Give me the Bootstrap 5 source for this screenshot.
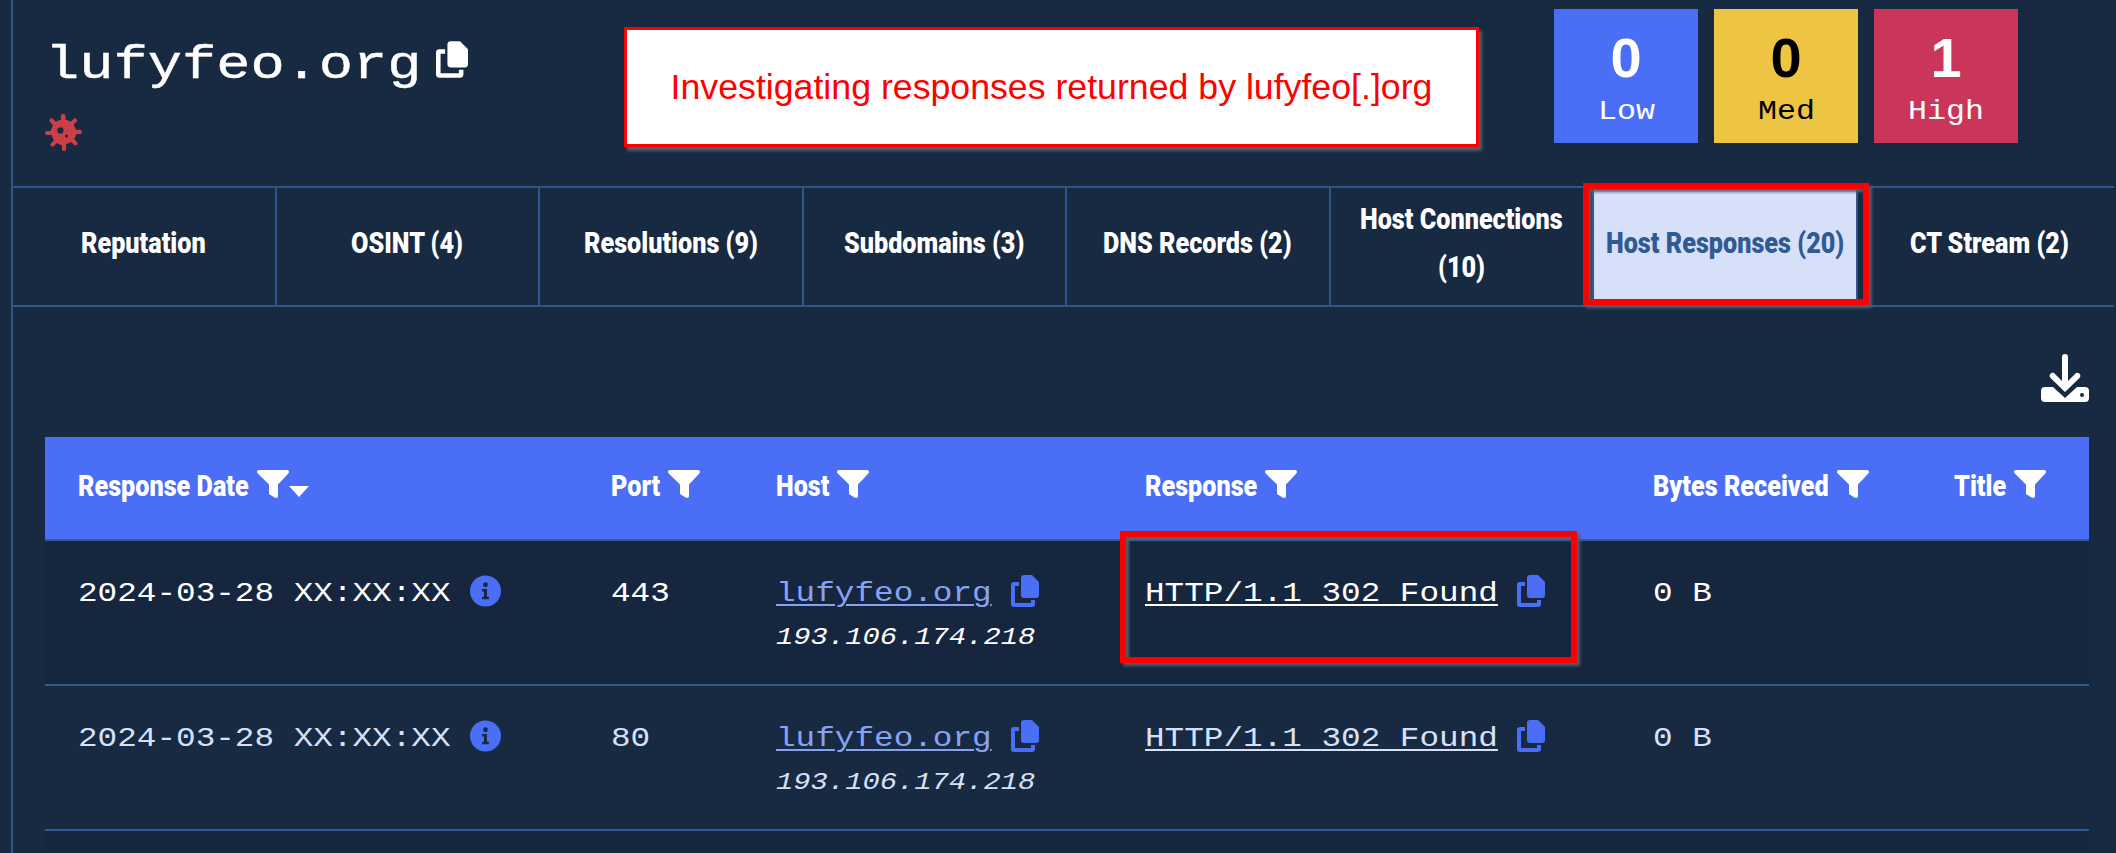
<!DOCTYPE html>
<html lang="en">
<head>
<meta charset="UTF-8" />
<title>lufyfeo.org</title>
<link href="https://cdn.jsdelivr.net/npm/bootstrap@5.3.0/dist/css/bootstrap.min.css" rel="stylesheet" />
<style>
  html, body { background: #182942; height: 100%; }
  body { overflow: hidden; color: #fff; }
  .sx { display: inline-block; transform: scaleX(var(--sx)); transform-origin: left center; }
  .page-wrap { margin-left: 11px; border-left: 2px solid #2f5688; width: 2103px; height: 853px; }
  .top-bar { height: 186px; }
  .brand-col { width: 611px; padding: 38px 0 0 32px; flex: none; }
  .domain-line { height: 56px; }
  .domain { --sx: 1.24; font: 46px/56px "Liberation Mono", monospace; margin: 0; -webkit-text-stroke: .4px #fff; }
  .brand-copy { margin: 3px 0 0 14px; }
  .bug { display: block; margin: 20px 0 0 0; color: #cc3f48; }
  .note-box { width: 855px; height: 120px; margin-top: 27px; flex: none; background: #fff; border: 3px solid #f00; box-shadow: 3px 4px 3px #555d6e; color: #f00; font: 35.7px "Liberation Sans", sans-serif; }
  .stats { margin: 9px 0 0 75px; gap: 16px; }
  .stat { width: 144px; height: 134px; text-align: center; }
  .stat b { display: block; font: bold 56px/1 "Liberation Sans", sans-serif; padding-top: 21px; }
  .stat .sx { --sx: 1.13; font: 28px/1 "Liberation Mono", monospace; margin-top: 12px; }
  .s-low { background: #4a6ff6; }
  .s-med { background: #eec443; color: #000; }
  .s-high { background: #cb3559; }
  .tab-row { border-top: 2px solid #2f5688; border-bottom: 2px solid #2f5688; height: 121px; overflow: hidden; }
  .tab-cell { width: 263.5px; flex: none; border-right: 2px solid #2f5688; font: 900 30px/48px Roboto, sans-serif; text-align: center; white-space: nowrap; padding-bottom: 8px; }
  .tab-cell.last { border-right: 0; }
  .tab-cell.on { background: #d6e0f9; color: #2f5a92; }
  .tab-cell .sx, .data-tbl th .sx { --sx: .84; }
  .dl-line { height: 130px; padding-top: 47px; width: 2076px; }
  .data-tbl { width: 2044px; margin-left: 32px; table-layout: fixed; border-collapse: collapse; }
  .data-tbl th { background: #4a6ff6; height: 103px; padding: 0 0 6px 33px; font: 900 30px Roboto, sans-serif; color: #fff; border-bottom: 2px solid #2f5a94; vertical-align: middle; white-space: nowrap; }
  .data-tbl th svg { margin-left: 8px; vertical-align: -2px; }
  .sort-caret { display: inline-block; border-left: 10px solid transparent; border-right: 10px solid transparent; border-top: 11px solid #fff; vertical-align: -1px; }
  .data-tbl td { height: 145px; padding: 35px 0 0 33px; vertical-align: top; font: 27px/36px "Liberation Mono", monospace; color: #d6e0f9; border-bottom: 2px solid #2f5a94; white-space: nowrap; }
  .data-tbl td .sx { --sx: 1.21; }
  .data-tbl tr.hl td { color: #fff; background: #16263f; }
  .data-tbl tr.tail td { height: 22px; padding: 0; border: 0; background: #16263f; }
  .data-tbl a { color: inherit; text-decoration-thickness: 2px; text-underline-offset: 3px; }
  .data-tbl a.host-link { color: #88a2f2; }
  .data-tbl td .ip { --sx: 1.2; display: block; width: max-content; font-style: italic; font-size: 24px; line-height: 36px; margin-top: 8px; }
  .ico { fill: currentColor; }
  .data-tbl td svg { color: #4a6ff6; vertical-align: top; margin: -1px 0 0 19px; }
  .mark-over { position: absolute; border: 6px solid #f00; box-shadow: 3px 3px 3px #555d6e, inset 3px 3px 3px #555d6e; pointer-events: none; }
  .mark-tab { left: 1583px; top: 183px; width: 286px; height: 122px; }
  .mark-cell { left: 1120px; top: 531px; width: 457px; height: 132px; }
</style>
</head>
<body>
<svg width="0" height="0" class="position-absolute">
  <symbol id="i-copy" viewBox="0 0 28 32"><path d="M13 0h8l7 7v13a3 3 0 0 1-3 3H13a3 3 0 0 1-3-3V3a3 3 0 0 1 3-3z"/><path d="M3 7h5v4H4v17h16v-3h4v4a3 3 0 0 1-3 3H3a3 3 0 0 1-3-3V10a3 3 0 0 1 3-3z"/></symbol>
  <symbol id="i-funnel" viewBox="0 0 32 28"><path d="M2 0h28c2 0 2.500 2 1.500 3.300L21 14.500V26c0 2-2 2.500-3.500 1.500L12 24V14.500L.5 3.300C-.5 2 0 0 2 0z"/></symbol>
  <symbol id="i-info" viewBox="0 0 32 32"><path fill-rule="evenodd" d="M16 0a16 16 0 1 1 0 32 16 16 0 0 1 0-32zm0 7a2.500 2.500 0 1 0 0 5 2.500 2.500 0 0 0 0-5zm-3.500 7v2.500H14.500V22H12.500v2.500h7V22H17.500V14z"/></symbol>
  <symbol id="i-virus" viewBox="0 0 36 36"><path fill-rule="evenodd" d="M18 0a2 2 0 0 1 2 2v3.500a12.500 12.500 0 0 1 5 2.100l2.500-2.500a2 2 0 1 1 2.800 2.800l-2.500 2.500a12.500 12.500 0 0 1 2.100 5H34a2 2 0 1 1 0 4h-3.600a12.500 12.500 0 0 1-2.100 5l2.500 2.500a2 2 0 1 1-2.800 2.800l-2.500-2.500a12.500 12.500 0 0 1-5 2.100V34a2 2 0 1 1-4 0v-3.600a12.500 12.500 0 0 1-5-2.100l-2.500 2.500a2 2 0 1 1-2.800-2.800l2.500-2.500a12.500 12.500 0 0 1-2.100-5H2a2 2 0 1 1 0-4h3.600a12.500 12.500 0 0 1 2.100-5L5.200 7.900A2 2 0 1 1 8 5.100l2.500 2.500a12.500 12.500 0 0 1 5-2.100V2a2 2 0 0 1 2.500-2zM15 13a3 3 0 1 0 0 6 3 3 0 0 0 0-6zm6 7a1.500 1.500 0 1 0 0 3 1.500 1.500 0 0 0 0-3z"/></symbol>
  <symbol id="i-dl" viewBox="0 0 48 48"><path d="M21 3a3 3 0 0 1 6 0v24l7-7a3 3 0 1 1 4.200 4.200L24 38 9.800 24.200A3 3 0 1 1 14 20l7 7z"/><path fill-rule="evenodd" d="M4 33h8l12 11 12-11h8a4 4 0 0 1 4 4v7a4 4 0 0 1-4 4H4a4 4 0 0 1-4-4v-7a4 4 0 0 1 4-4zm37 6a2 2 0 1 0 0 4 2 2 0 0 0 0-4z"/></symbol>
</svg>

<div class="page-wrap">
  <div class="top-bar d-flex">
    <div class="brand-col">
      <div class="domain-line d-flex align-items-start">
        <h1 class="domain sx">lufyfeo.org</h1>
        <svg class="ico brand-copy" width="32" height="37"><use href="#i-copy"/></svg>
      </div>
      <svg class="ico bug" width="37" height="37"><use href="#i-virus"/></svg>
    </div>
    <div class="note-box d-flex align-items-center justify-content-center">Investigating responses returned by lufyfeo[.]org</div>
    <div class="stats d-flex">
      <div class="stat s-low"><b>0</b><span class="sx">Low</span></div>
      <div class="stat s-med"><b>0</b><span class="sx">Med</span></div>
      <div class="stat s-high"><b>1</b><span class="sx">High</span></div>
    </div>
  </div>

  <div class="tab-row d-flex">
    <div class="tab-cell d-flex align-items-center justify-content-center"><span class="sx">Reputation</span></div>
    <div class="tab-cell d-flex align-items-center justify-content-center"><span class="sx">OSINT (4)</span></div>
    <div class="tab-cell d-flex align-items-center justify-content-center"><span class="sx">Resolutions (9)</span></div>
    <div class="tab-cell d-flex align-items-center justify-content-center"><span class="sx">Subdomains (3)</span></div>
    <div class="tab-cell d-flex align-items-center justify-content-center"><span class="sx">DNS Records (2)</span></div>
    <div class="tab-cell d-flex flex-column align-items-center justify-content-center"><span class="sx">Host Connections</span><span class="sx">(10)</span></div>
    <div class="tab-cell on d-flex align-items-center justify-content-center"><span class="sx">Host Responses (20)</span></div>
    <div class="tab-cell last d-flex align-items-center justify-content-center"><span class="sx">CT Stream (2)</span></div>
  </div>

  <div class="dl-line d-flex justify-content-end">
    <svg class="ico" width="48" height="48"><use href="#i-dl"/></svg>
  </div>

  <table class="data-tbl">
    <colgroup><col width="533"><col width="165"><col width="369"><col width="508"><col width="301"><col width="168"></colgroup>
    <thead>
      <tr>
        <th><span class="sx">Response Date</span><svg class="ico" width="32" height="28"><use href="#i-funnel"/></svg><span class="sort-caret"></span></th>
        <th><span class="sx">Port</span><svg class="ico" width="32" height="28"><use href="#i-funnel"/></svg></th>
        <th><span class="sx">Host</span><svg class="ico" width="32" height="28"><use href="#i-funnel"/></svg></th>
        <th><span class="sx">Response</span><svg class="ico" width="32" height="28"><use href="#i-funnel"/></svg></th>
        <th><span class="sx">Bytes Received</span><svg class="ico" width="32" height="28"><use href="#i-funnel"/></svg></th>
        <th><span class="sx">Title</span><svg class="ico" width="32" height="28"><use href="#i-funnel"/></svg></th>
      </tr>
    </thead>
    <tbody>
      <tr class="hl">
        <td><span class="sx">2024-03-28 XX:XX:XX</span><svg class="ico" width="31" height="32"><use href="#i-info"/></svg></td>
        <td><span class="sx">443</span></td>
        <td><a class="host-link sx" href="#">lufyfeo.org</a><svg class="ico" width="28" height="32"><use href="#i-copy"/></svg><span class="ip sx">193.106.174.218</span></td>
        <td><a class="sx" href="#">HTTP/1.1 302 Found</a><svg class="ico" width="28" height="32"><use href="#i-copy"/></svg></td>
        <td><span class="sx">0 B</span></td>
        <td></td>
      </tr>
      <tr>
        <td><span class="sx">2024-03-28 XX:XX:XX</span><svg class="ico" width="31" height="32"><use href="#i-info"/></svg></td>
        <td><span class="sx">80</span></td>
        <td><a class="host-link sx" href="#">lufyfeo.org</a><svg class="ico" width="28" height="32"><use href="#i-copy"/></svg><span class="ip sx">193.106.174.218</span></td>
        <td><a class="sx" href="#">HTTP/1.1 302 Found</a><svg class="ico" width="28" height="32"><use href="#i-copy"/></svg></td>
        <td><span class="sx">0 B</span></td>
        <td></td>
      </tr>
      <tr class="tail"><td colspan="6"></td></tr>
    </tbody>
  </table>
</div>
<div class="mark-over mark-tab"></div>
<div class="mark-over mark-cell"></div>
<script src="https://cdn.jsdelivr.net/npm/bootstrap@5.3.0/dist/js/bootstrap.bundle.min.js"></script>
<script>
  // scaled text keeps its unscaled box, so give the difference back to the flow
  document.querySelectorAll(".sx").forEach((el) => {
    const sx = parseFloat(getComputedStyle(el).getPropertyValue("--sx"));
    el.style.marginRight = (sx - 1) * el.offsetWidth + "px";
  });
</script>
</body>
</html>
